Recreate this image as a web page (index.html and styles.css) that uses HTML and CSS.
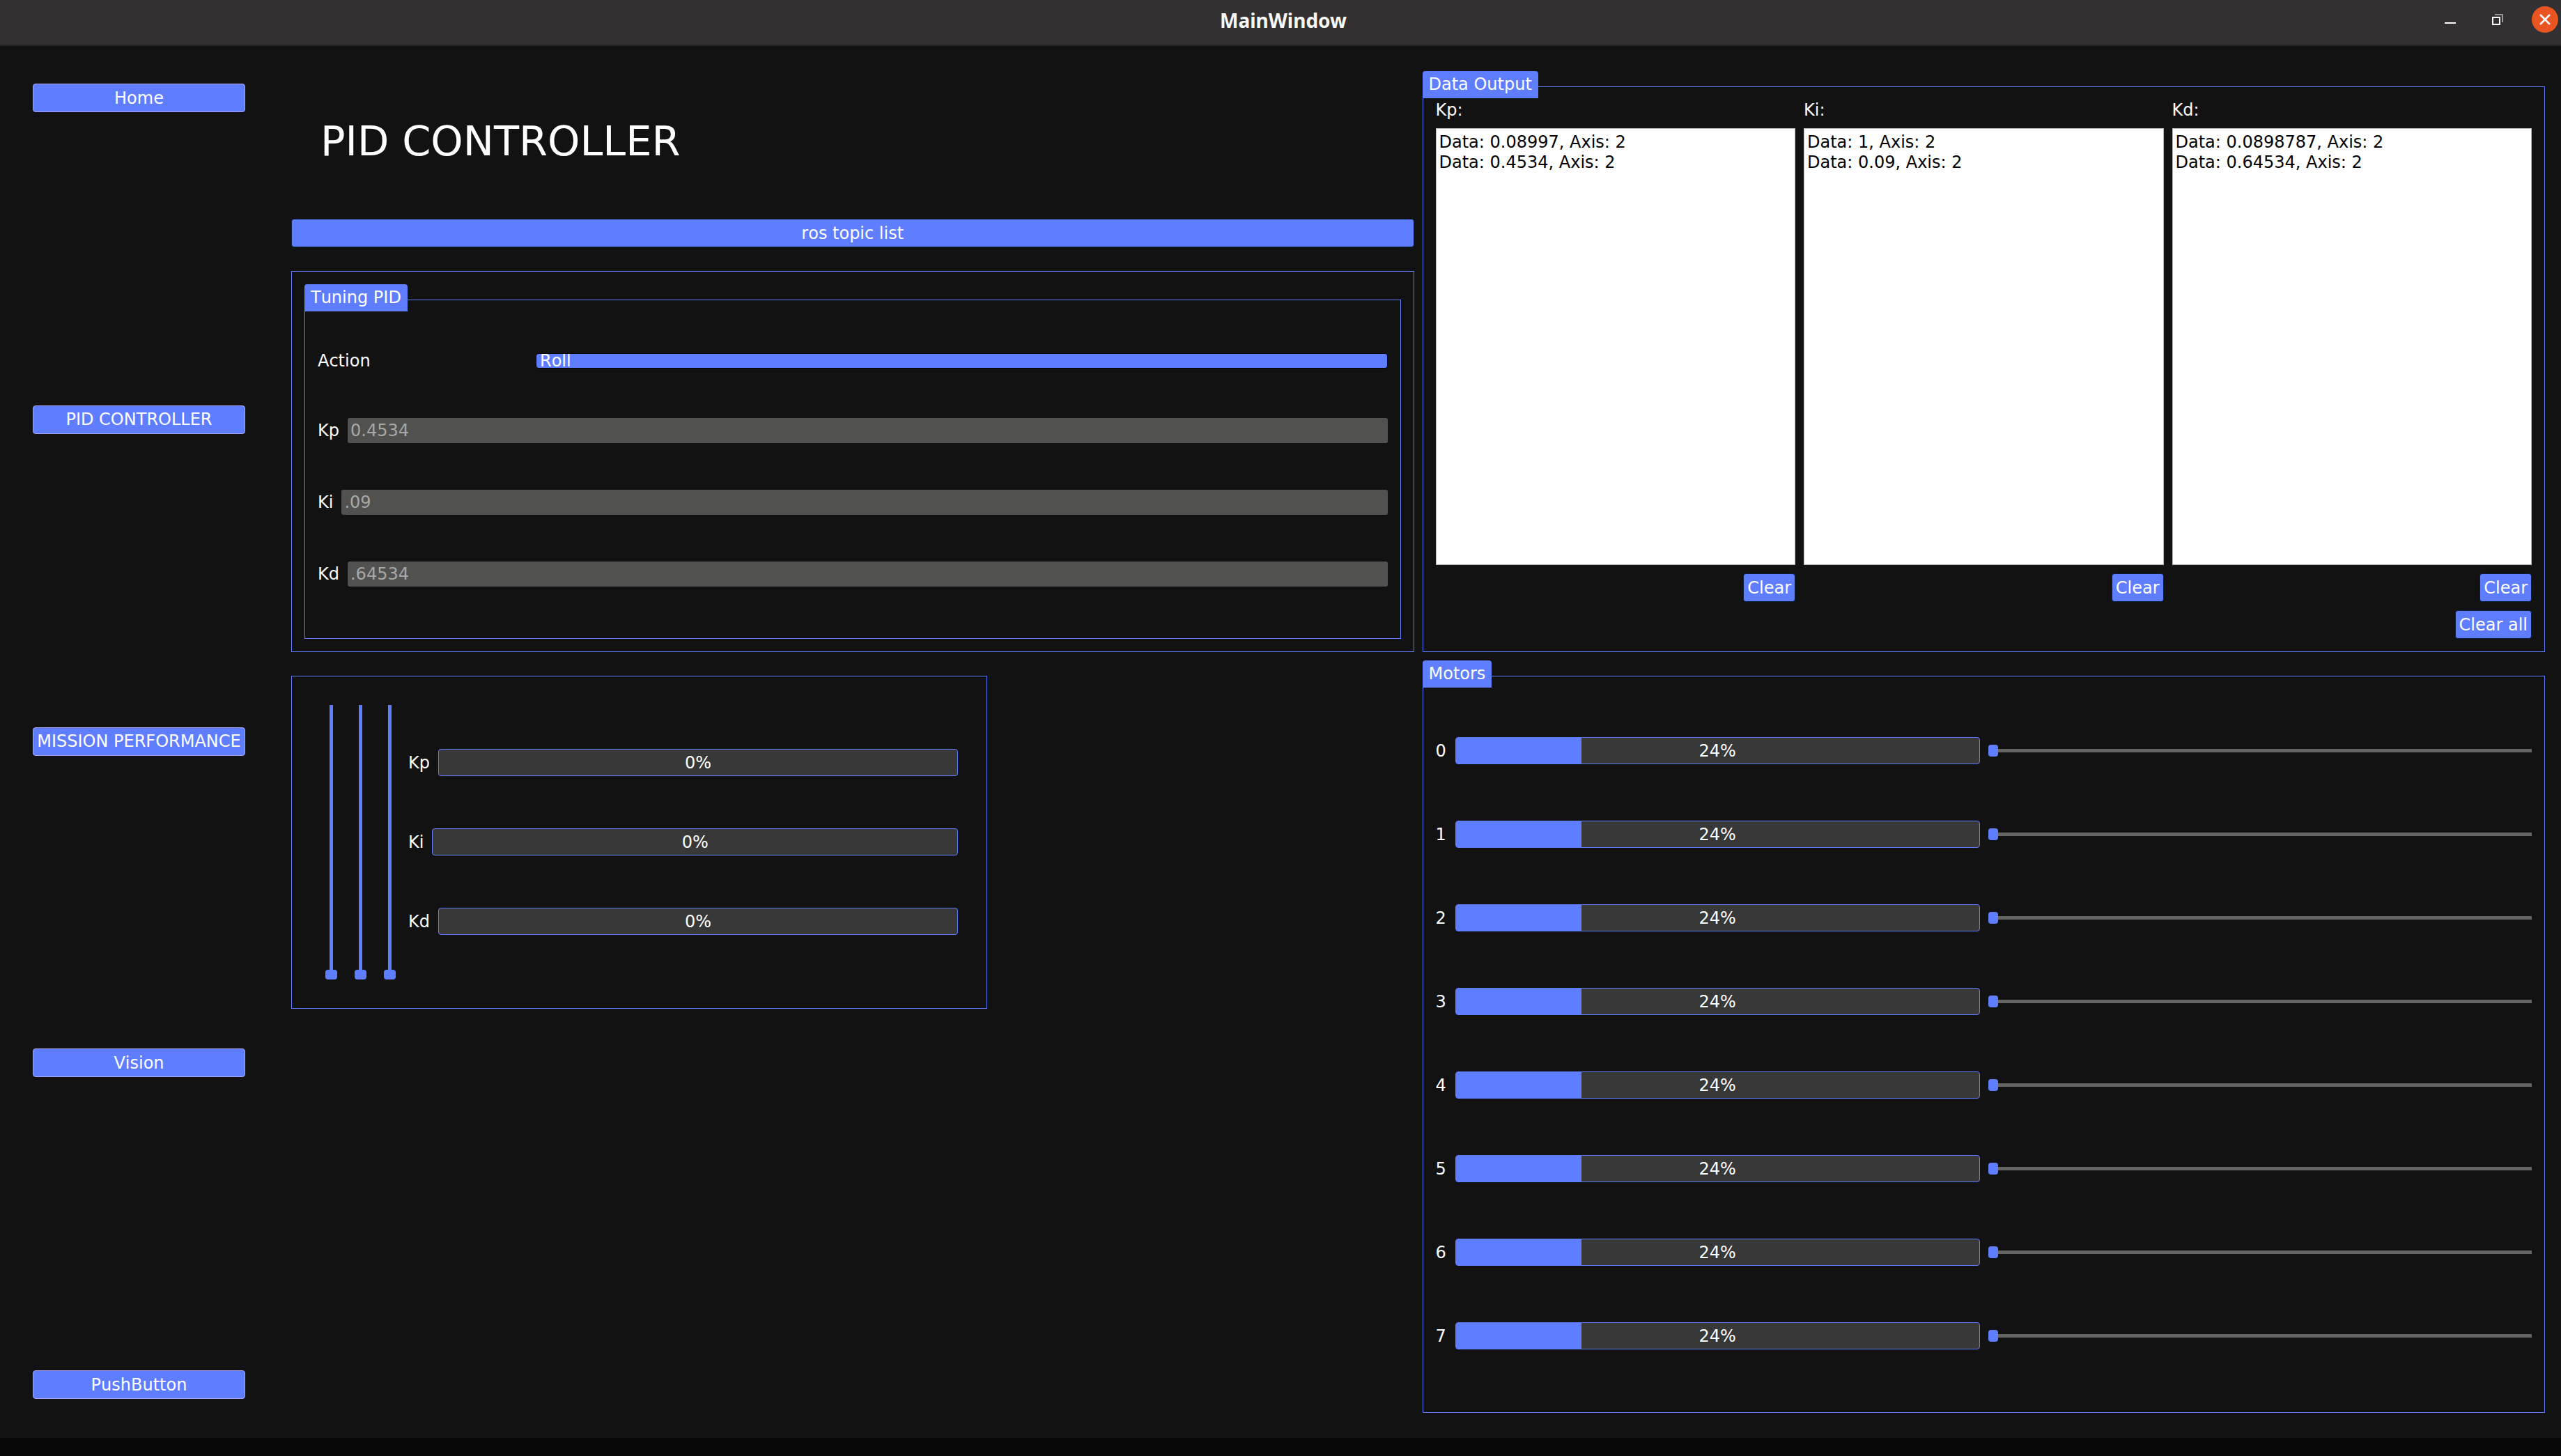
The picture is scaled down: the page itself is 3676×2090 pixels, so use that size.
FILE: index.html
```html
<!DOCTYPE html>
<html lang="en">
<head>
<meta charset="utf-8">
<meta name="viewport" content="width=device-width, initial-scale=1">
<title>MainWindow</title>
<link rel="stylesheet" href="styles.css">
</head>
<body>
<header class="titlebar">
  <span class="titlebar-name">MainWindow</span>
  <div class="window-controls">
    <button class="window-button" aria-label="Minimize"><svg width="16" height="16" viewBox="0 0 16 16"><path d="M0 12h16v2H0z" fill="#fff"/></svg></button>
    <button class="window-button" aria-label="Restore"><svg width="16" height="16" viewBox="0 0 16 16"><path d="M4 0h12v12h-2V2H4z" fill="#979595"/><path d="M1 5h10v10H1z" fill="none" stroke="#fff" stroke-width="2"/></svg></button>
    <button class="window-button close" aria-label="Close"><svg width="16" height="16" viewBox="0 0 16 16"><path d="M1 1l14 14M15 1L1 15" stroke="#fff" stroke-width="2.6"/></svg></button>
  </div>
</header>

<div class="workspace">
  <nav class="sidebar" aria-label="Pages">
    <button class="button">Home</button>
    <button class="button">PID CONTROLLER</button>
    <button class="button">MISSION PERFORMANCE</button>
    <button class="button">Vision</button>
    <button class="button">PushButton</button>
  </nav>

  <main class="panels">
    <div class="controller">
      <h1 class="page-title">PID CONTROLLER</h1>
      <button class="button">ros topic list</button>
      <div class="frame tuning-frame">
        <section class="frame group tuning">
          <h2 class="tab">Tuning PID</h2>
          <div class="tuning-rows">
            <div class="row">
              <label class="action-label" for="action">Action</label>
              <select class="combo" id="action"><option>Roll</option></select>
            </div>
            <div class="row"><label for="kp">Kp</label><input class="field" id="kp" type="text" value="0.4534" disabled></div>
            <div class="row"><label for="ki">Ki</label><input class="field" id="ki" type="text" value=".09" disabled></div>
            <div class="row"><label for="kd">Kd</label><input class="field" id="kd" type="text" value=".64534" disabled></div>
          </div>
        </section>
      </div>
    </div>

    <section class="frame group output">
      <h2 class="tab">Data Output</h2>
      <div class="output-columns">
        <div class="output-column">
          <label for="out-kp">Kp:</label>
          <textarea class="log" id="out-kp" readonly>Data: 0.08997, Axis: 2
Data: 0.4534, Axis: 2</textarea>
          <button class="button compact">Clear</button>
        </div>
        <div class="output-column">
          <label for="out-ki">Ki:</label>
          <textarea class="log" id="out-ki" readonly>Data: 1, Axis: 2
Data: 0.09, Axis: 2</textarea>
          <button class="button compact">Clear</button>
        </div>
        <div class="output-column">
          <label for="out-kd">Kd:</label>
          <textarea class="log" id="out-kd" readonly>Data: 0.0898787, Axis: 2
Data: 0.64534, Axis: 2</textarea>
          <button class="button compact">Clear</button>
        </div>
      </div>
      <button class="button compact">Clear all</button>
    </section>

    <section class="frame gains">
      <input class="slider vertical" type="range" value="0" aria-label="Kp">
      <input class="slider vertical" type="range" value="0" aria-label="Ki">
      <input class="slider vertical" type="range" value="0" aria-label="Kd">
      <div class="gain-rows">
        <div class="row"><label for="bar-kp">Kp</label><div class="meter"><progress id="bar-kp" max="100" value="0"></progress><span>0%</span></div></div>
        <div class="row"><label for="bar-ki">Ki</label><div class="meter"><progress id="bar-ki" max="100" value="0"></progress><span>0%</span></div></div>
        <div class="row"><label for="bar-kd">Kd</label><div class="meter"><progress id="bar-kd" max="100" value="0"></progress><span>0%</span></div></div>
      </div>
    </section>

    <section class="frame group motors">
      <h2 class="tab">Motors</h2>
      <div class="motor-rows">
        <div class="motor"><label for="m0">0</label><div class="meter"><progress id="m0" max="100" value="24"></progress><span>24%</span></div><input class="slider" type="range" value="0" aria-label="Motor 0"></div>
        <div class="motor"><label for="m1">1</label><div class="meter"><progress id="m1" max="100" value="24"></progress><span>24%</span></div><input class="slider" type="range" value="0" aria-label="Motor 1"></div>
        <div class="motor"><label for="m2">2</label><div class="meter"><progress id="m2" max="100" value="24"></progress><span>24%</span></div><input class="slider" type="range" value="0" aria-label="Motor 2"></div>
        <div class="motor"><label for="m3">3</label><div class="meter"><progress id="m3" max="100" value="24"></progress><span>24%</span></div><input class="slider" type="range" value="0" aria-label="Motor 3"></div>
        <div class="motor"><label for="m4">4</label><div class="meter"><progress id="m4" max="100" value="24"></progress><span>24%</span></div><input class="slider" type="range" value="0" aria-label="Motor 4"></div>
        <div class="motor"><label for="m5">5</label><div class="meter"><progress id="m5" max="100" value="24"></progress><span>24%</span></div><input class="slider" type="range" value="0" aria-label="Motor 5"></div>
        <div class="motor"><label for="m6">6</label><div class="meter"><progress id="m6" max="100" value="24"></progress><span>24%</span></div><input class="slider" type="range" value="0" aria-label="Motor 6"></div>
        <div class="motor"><label for="m7">7</label><div class="meter"><progress id="m7" max="100" value="24"></progress><span>24%</span></div><input class="slider" type="range" value="0" aria-label="Motor 7"></div>
      </div>
    </section>
  </main>
</div>
<footer class="statusbar"></footer>
</body>
</html>
```
FILE: styles.css
```css
:root {
  --accent: #5f7dff;
  --bg: #121212;
  --gap: 12px;
}

* { box-sizing: border-box; }

body {
  margin: 0;
  min-height: 100vh;
  display: flex;
  flex-direction: column;
  background: var(--bg);
  color: #fff;
  font: 24px/28px "DejaVu Sans", sans-serif;
  font-kerning: none;
}

button, input, select, textarea {
  font: inherit;
  font-kerning: none;
  color: inherit;
  margin: 0;
}

/* Title bar */
.titlebar {
  display: grid;
  grid-template-columns: 1fr auto 1fr;
  align-items: center;
  height: 66px;
  padding: 0 4px 8px 12px;
  background: #333031;
  border-bottom: 2px solid #232222;
}
.titlebar-name {
  grid-column: 2;
  padding-top: 2px;
  font: bold 28px/38px "Noto Sans", sans-serif;
  color: #f7f7f7;
}
.window-controls {
  display: flex;
  justify-content: flex-end;
  gap: 30px;
}
.window-button {
  display: grid;
  place-items: center;
  width: 38px;
  height: 38px;
  padding: 0;
  border: 0;
  border-radius: 50%;
  background: none;
}
.window-button.close { background: #e95420; }

/* Page frame */
.workspace {
  flex: 1;
  display: flex;
  gap: 66px;
  padding: 0 23px 0 47px;
}
.sidebar {
  flex: 0 0 305px;
  display: flex;
  flex-direction: column;
  justify-content: space-between;
  padding: 54px 0 56px;
}
.panels {
  flex: 1;
  display: grid;
  grid-template-columns: 1fr 1fr;
  grid-template-rows: auto 1fr;
  gap: 34px var(--gap);
  padding-bottom: 36px;
}
.statusbar {
  height: 26px;
  background: #080808;
}

/* Shared parts */
.button {
  height: 41px;
  padding: 0 5px;
  border: 1px solid #0c1c3c;
  border-radius: 4px;
  background: var(--accent);
  white-space: nowrap;
}
.sidebar .button { border-color: #a9a4f4; }
.button.compact { align-self: flex-end; }

.frame { border: 1px solid var(--accent); }
.group {
  display: flex;
  flex-direction: column;
  padding: 0 18px 18px;
}
.tab {
  align-self: flex-start;
  margin: -23px 0 0 -19px;
  padding: 5px 9px 6px;
  border-radius: 4px 4px 0 0;
  background: var(--accent);
  font: inherit;
  font-kerning: none;
}
.row {
  display: flex;
  align-items: center;
  gap: var(--gap);
}

/* Tuning */
.controller {
  display: flex;
  flex-direction: column;
}
.page-title {
  margin: 0;
  padding: 102px 42px 76px;
  font-size: 59px;
  line-height: 70px;
  font-weight: normal;
}
.tuning-frame {
  margin-top: 34px;
  padding: 40px 18px 18px;
}
.tuning-rows {
  display: flex;
  flex-direction: column;
  gap: 67px;
  padding: 56px 0;
}
.action-label { flex: 0 0 301px; }
.combo {
  flex: 1;
  height: 22px;
  margin: 4px 0;
  padding: 0 5px;
  appearance: none;
  border: 1px solid #000;
  border-radius: 4px;
  background: var(--accent);
  line-height: 20px;
}
.field {
  flex: 1;
  height: 36px;
  padding: 0 4px;
  border: 0;
  border-radius: 3px;
  background: #51514f;
  color: #a8a8a6;
}

/* Data output */
.output { margin-top: 58px; }
.output-columns {
  flex: 1;
  display: grid;
  grid-template-columns: repeat(3, 1fr);
  gap: var(--gap);
  padding: 3px 0 12px;
}
.output-column {
  display: flex;
  flex-direction: column;
  gap: var(--gap);
}
.log {
  flex: 1;
  width: 100%;
  padding: 5px 4px;
  border: 1px solid #b9b9b7;
  border-radius: 0;
  background: #fff;
  color: #000;
  line-height: 29px;
  resize: none;
}

/* Progress bars and sliders */
.meter {
  flex: 1;
  display: grid;
  height: 39px;
  border: 1px solid var(--accent);
  border-radius: 4px;
  background: #383838;
  overflow: hidden;
}
.meter > * { grid-area: 1 / 1; }
.meter span { place-self: center; }
.meter progress {
  width: 100%;
  height: 100%;
  appearance: none;
  border: 0;
}
.meter progress::-webkit-progress-bar { background: none; }
.meter progress::-webkit-progress-value { background: var(--accent); }

.slider {
  width: 100%;
  height: 17px;
  appearance: none;
  background: linear-gradient(#656563, #656563) center / 100% 5px no-repeat;
}
.slider::-webkit-slider-thumb {
  appearance: none;
  width: 14px;
  height: 17px;
  border-radius: 4px;
  background: var(--accent);
}
.slider.vertical {
  width: 17px;
  height: auto;
  writing-mode: vertical-lr;
  direction: rtl;
  background: linear-gradient(var(--accent), var(--accent)) center / 5px 100% no-repeat;
}
.slider.vertical::-webkit-slider-thumb {
  width: 17px;
  height: 14px;
}

/* Gains */
.gains {
  display: flex;
  gap: 25px;
  align-self: start;
  width: 62%;
  padding: 41px 41px 41px 48px;
}
.gain-rows {
  flex: 1;
  display: flex;
  flex-direction: column;
  gap: 75px;
  margin-left: -7px;
  padding: 63px 0 64px;
}

/* Motors */
.motor-rows {
  flex: 1;
  display: flex;
  flex-direction: column;
  justify-content: space-between;
  padding: 71px 0 72px;
}
.motor {
  display: grid;
  grid-template-columns: 16px 28fr 29fr;
  align-items: center;
  gap: var(--gap);
}
```
